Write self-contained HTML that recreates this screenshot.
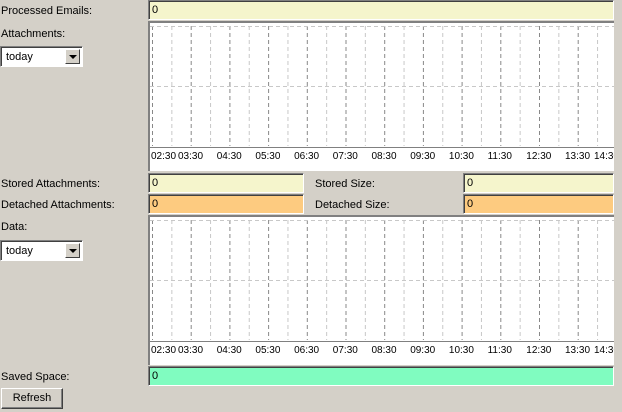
<!DOCTYPE html>
<html><head><style>
body{margin:0;width:622px;height:412px;background:#d4d0c8;font-family:"Liberation Sans",sans-serif;font-size:11px;color:#000;position:relative;overflow:hidden}
.l{position:absolute;left:1px}
.f{position:absolute;box-sizing:border-box;border-top:1px solid #808080;border-left:1px solid #808080;border-right:1px solid #fff;border-bottom:1px solid #fff;box-shadow:inset 1px 1px 0 #404040;padding:3px 0 0 3px;height:20px}
.c{position:absolute;left:148px;width:466px;box-sizing:border-box;border-top:2px solid #808080;border-left:2px solid #808080;background:#fff}
.sel{position:absolute;left:0;width:83px;height:21px;box-sizing:border-box;border:1px solid #808080;border-right-color:#fff;border-bottom-color:#fff;background:#fff;box-shadow:inset 1px 1px 0 #404040}
.sel span{position:absolute;left:5px;top:4px}
.sel i{position:absolute;right:2px;top:2px;width:15px;height:15px;box-sizing:border-box;background:#d4d0c8;border:1px solid;border-color:#fff #404040 #404040 #fff}
.sel i:after{content:"";position:absolute;left:3px;top:5px;border-left:4px solid transparent;border-right:4px solid transparent;border-top:4px solid #000}
</style></head><body>
<div class="l" style="top:5px">Processed Emails:</div>
<div class="f" style="left:148px;top:0;width:466px;background:#f5f5cc">0</div>
<div class="l" style="top:28px">Attachments:</div>
<div class="sel" style="top:46px"><span>today</span><i></i></div>
<div class="c" style="top:21px;height:150px"><svg id="s1" width="464" height="148"></svg></div>
<div class="l" style="top:178px">Stored Attachments:</div>
<div class="f" style="left:148px;top:173px;width:156px;background:#f5f5cc">0</div>
<div class="l" style="left:315px;top:178px">Stored Size:</div>
<div class="f" style="left:463px;top:173px;width:151px;background:#f5f5cc">0</div>
<div class="l" style="top:199px">Detached Attachments:</div>
<div class="f" style="left:148px;top:194px;width:156px;background:#fdcb80">0</div>
<div class="l" style="left:315px;top:199px">Detached Size:</div>
<div class="f" style="left:463px;top:194px;width:151px;background:#fdcb80">0</div>
<div class="l" style="top:221px">Data:</div>
<div class="sel" style="top:240px"><span>today</span><i></i></div>
<div class="c" style="top:215px;height:150px"><svg id="s2" width="464" height="148"></svg></div>
<div class="l" style="top:371px">Saved Space:</div>
<div class="f" style="left:148px;top:366px;width:466px;background:#80fcc0">0</div>
<div style="position:absolute;left:1px;top:388px;width:62px;height:21px;box-sizing:border-box;border:1px solid;border-color:#fff #404040 #404040 #fff;box-shadow:inset -1px -1px 0 #808080;text-align:center;line-height:19px">Refresh</div>
<script>
function draw(id){var s=document.getElementById(id),h='';
for(var i=0;i<24;i++){var x=2+i*19.35;if(x>463)break;h+='<line x1="'+(x+.5)+'" y1="3" x2="'+(x+.5)+'" y2="123" stroke="'+(i%2?'#c8c8c8':'#888')+'" stroke-dasharray="4,3"/>';}
h+='<line x1="0" y1="3.5" x2="464" y2="3.5" stroke="#c8c8c8" stroke-dasharray="4,3"/>';
h+='<line x1="0" y1="63.5" x2="464" y2="63.5" stroke="#c8c8c8" stroke-dasharray="4,3"/>';
h+='<line x1="0" y1="124.5" x2="464" y2="124.5" stroke="#808080"/>';
var L=['02:30','03:30','04:30','05:30','06:30','07:30','08:30','09:30','10:30','11:30','12:30','13:30','14:30'];
for(var j=0;j<L.length;j++){var x=j==0?1:28+(j-1)*38.7;if(j==12)x=444;h+='<text x="'+x+'" y="136" font-size="10" font-family="Liberation Sans">'+L[j]+'</text>';}
s.innerHTML=h;}
draw('s1');draw('s2');
</script>
</body></html>
